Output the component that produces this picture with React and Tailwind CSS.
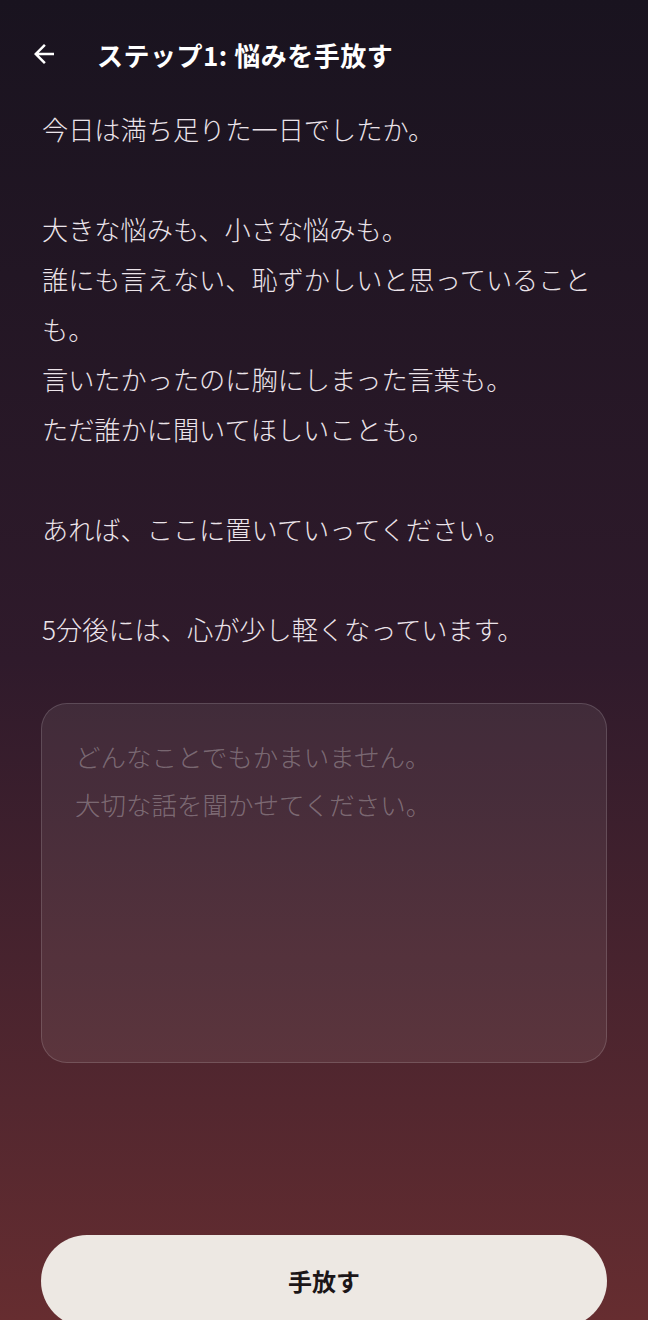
import { useState } from "react";

const bodyLines = [
  "今日は満ち足りた一日でしたか。",
  "",
  "大きな悩みも、小さな悩みも。",
  "誰にも言えない、恥ずかしいと思っていることも。",
  "言いたかったのに胸にしまった言葉も。",
  "ただ誰かに聞いてほしいことも。",
  "",
  "あれば、ここに置いていってください。",
  "",
  "5分後には、心が少し軽くなっています。",
];

export default function App() {
  const [text, setText] = useState("");
  return (
    <div
      className="w-[648px] h-[1320px] overflow-hidden flex flex-col bg-gradient-to-b from-[#19131f] via-[#2f1a2b] to-[#662d30] text-[#ece4ea]"
      style={{ fontFamily: '"Noto Sans CJK JP", "Noto Sans", sans-serif' }}
    >
      <div className="flex items-center h-[54px] mt-[27px] pl-[29px]">
        <button className="w-[30px] h-[30px] flex items-center justify-center text-white">
          <svg width="30" height="30" viewBox="0 0 24 24" fill="currentColor">
            <path d="M20 11H7.83l5.59-5.59L12 4l-8 8 8 8 1.41-1.41L7.83 13H20v-2z" />
          </svg>
        </button>
        <h1 className="ml-[38px] text-[26px] font-bold text-white tracking-[0.5px]">ステップ1: 悩みを手放す</h1>
      </div>

      <div className="px-[42px] mt-[23px] text-[26.2px] leading-[50px] font-light">
        {bodyLines.map((l, i) => (
          <div key={i} className="min-h-[50px]">{l}</div>
        ))}
      </div>

      <div className="px-[41px] mt-[49px]">
        <textarea
          value={text}
          onChange={(e) => setText(e.target.value)}
          placeholder={"どんなことでもかまいません。\n大切な話を聞かせてください。"}
          className="block w-full h-[360px] resize-none rounded-[26px] border border-white/15 bg-white/[0.07] px-[33px] py-[28px] text-[25.5px] leading-[48px] font-light text-white placeholder:text-white/30 focus:outline-none"
        />
      </div>

      <div className="flex-1" />

      <div className="px-[41px]">
        <button className="w-full h-[92px] mb-[-7px] rounded-full bg-[#ede8e3] text-[#1c1618] text-[24px] font-bold">
          手放す
        </button>
      </div>
    </div>
  );
}
